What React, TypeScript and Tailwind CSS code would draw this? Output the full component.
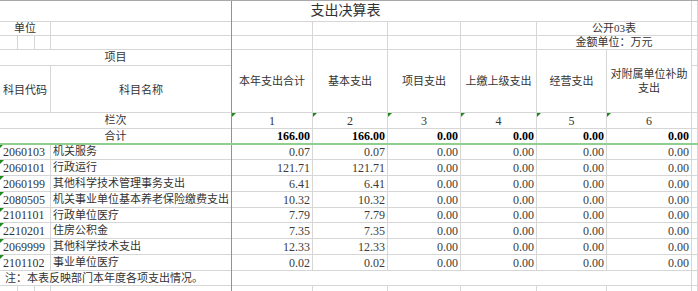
import React from "react";

const rows = [
  ["2060103", "机关服务", "0.07", "0.07"],
  ["2060101", "行政运行", "121.71", "121.71"],
  ["2060199", "其他科学技术管理事务支出", "6.41", "6.41"],
  ["2080505", "机关事业单位基本养老保险缴费支出", "10.32", "10.32"],
  ["2101101", "行政单位医疗", "7.79", "7.79"],
  ["2210201", "住房公积金", "7.35", "7.35"],
  ["2069999", "其他科学技术支出", "12.33", "12.33"],
  ["2101102", "事业单位医疗", "0.02", "0.02"],
];

const B = "border-r border-b border-[#d6d6d6]";

function Tri() {
  return (
    <span className="absolute left-0 top-0 w-0 h-0 border-t-[4px] border-r-[4px] border-t-[#1e8a1e] border-r-transparent" />
  );
}

function Num({ v, bold }: { v: string; bold?: boolean }) {
  return (
    <div
      className={`${B} flex items-center justify-end pr-[2px] text-[12px] ${
        bold ? "font-bold text-black" : "text-[#3a3a3a]"
      }`}
    >
      {v}
    </div>
  );
}

export default function App() {
  const heads = ["本年支出合计", "基本支出", "项目支出", "上缴上级支出", "经营支出"];
  return (
    <div
      className="relative w-[698px] h-[291px] overflow-hidden bg-white border-t border-[#a8a8a8] text-[#333] text-[11px] leading-none"
      style={{ fontFamily: '"Liberation Serif", "Noto Sans CJK SC", serif' }}
    >
      <div className="grid grid-cols-[18px_17px_16px_181px_81px_75px_73px_76px_70px_85px_6px] grid-rows-[21px_14px_14px_16px_47px_16px_15px_16px_16px_16px_16px_15px_16px_16px_16px_15px_10px]">
        {/* row 1 */}
        <div className={`${B} col-span-10 flex items-center justify-center text-[14px] text-[#333]`}>支出决算表</div>
        <div className={B} />
        {/* row 2 */}
        <div className={`${B} col-span-3 flex items-center justify-center`}>单位</div>
        <div className={B} />
        <div className={B} />
        <div className={B} />
        <div className={B} />
        <div className={B} />
        <div className={`${B} col-span-2 flex items-center justify-center`}>公开03表</div>
        <div className={B} />
        {/* row 3 */}
        <div className={B} />
        <div className={B} />
        <div className={B} />
        <div className={B} />
        <div className={B} />
        <div className={B} />
        <div className={B} />
        <div className={B} />
        <div className={`${B} col-span-2 flex items-center justify-center`}>金额单位：万元</div>
        <div className={B} />
        {/* row 4 */}
        <div className={`${B} col-span-4 flex items-center justify-center`}>项目</div>
        {heads.map((h) => (
          <div key={h} className={`${B} row-span-2 flex items-center justify-center text-center px-[2px] leading-[14px]`}>
            {h}
          </div>
        ))}
        <div className={`${B} row-span-2 flex flex-col items-center justify-center text-center leading-[14px] whitespace-nowrap`}>
          <span>对附属单位补助</span>
          <span>支出</span>
        </div>
        <div className={B} />
        {/* row 5 */}
        <div className={`${B} col-span-3 flex items-center justify-center pt-[2px]`}>科目代码</div>
        <div className={`${B} flex items-center justify-center pt-[2px]`}>科目名称</div>
        <div className={B} />
        {/* row 6 */}
        <div className={`${B} col-span-4 flex items-center justify-center`}>栏次</div>
        {["1", "2", "3", "4", "5", "6"].map((n) => (
          <div key={n} className={`${B} relative flex items-center justify-center text-[12px]`}>
            <Tri />
            {n}
          </div>
        ))}
        <div className={B} />
        {/* row 7 */}
        <div className={`${B} col-span-4 flex items-center justify-center`}>合计</div>
        <Num v="166.00" bold />
        <Num v="166.00" bold />
        <Num v="0.00" bold />
        <Num v="0.00" bold />
        <Num v="0.00" bold />
        <Num v="0.00" bold />
        <div className={B} />
        {/* data */}
        {rows.map((r) => (
          <React.Fragment key={r[0]}>
            <div className={`${B} col-span-3 relative flex items-center pl-[3px] text-[12px]`}>
              <Tri />
              {r[0]}
            </div>
            <div className={`${B} flex items-center pl-[2px] whitespace-nowrap`}>{r[1]}</div>
            <Num v={r[2]} />
            <Num v={r[3]} />
            <Num v="0.00" />
            <Num v="0.00" />
            <Num v="0.00" />
            <Num v="0.00" />
            <div className={B} />
          </React.Fragment>
        ))}
        {/* note */}
        <div className={`${B} col-span-10 flex items-center pl-[5px]`}>注：本表反映部门本年度各项支出情况。</div>
        <div className={B} />
        {/* last row */}
        <div className={B} />
        <div className={B} />
        <div className={B} />
        <div className={B} />
        <div className={B} />
        <div className={B} />
        <div className={B} />
        <div className={B} />
        <div className={B} />
        <div className={B} />
        <div className={B} />
      </div>
      {/* frozen pane lines */}
      <div className="absolute left-[231px] top-0 bottom-0 w-px bg-[#5cb85c]" />
      <div className="absolute left-0 right-0 top-[142px] h-[2px] bg-[#8fce8f]" />
    </div>
  );
}
